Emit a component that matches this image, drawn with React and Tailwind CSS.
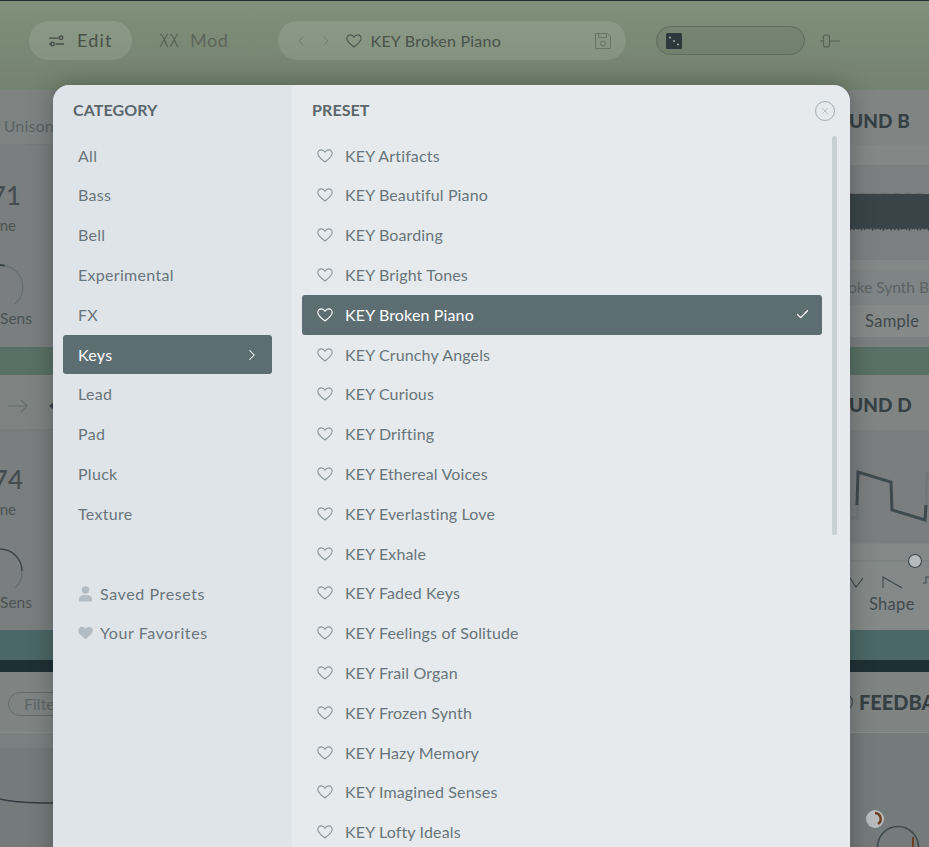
import React from "react";
import { ChevronLeft, ChevronRight, Check, X } from "lucide-react";

const categories = ["All", "Bass", "Bell", "Experimental", "FX", "Keys", "Lead", "Pad", "Pluck", "Texture"];
const presets = ["Artifacts", "Beautiful Piano", "Boarding", "Bright Tones", "Broken Piano", "Crunchy Angels", "Curious", "Drifting", "Ethereal Voices", "Everlasting Love", "Exhale", "Faded Keys", "Feelings of Solitude", "Frail Organ", "Frozen Synth", "Hazy Memory", "Imagined Senses", "Lofty Ideals"];

function OutlineHeart({ color = "#8b9499" }) {
  return (
    <svg width="16" height="14" viewBox="0 0 16 14" fill="none" stroke={color} strokeWidth="1.1" className="shrink-0">
      <path d="M8 13 C5 10.6 1 8 .8 4.6 C.7 2.4 2.4 .9 4.3 .9 C5.9 .9 7.2 1.8 8 3.2 C8.8 1.8 10.1 .9 11.7 .9 C13.6 .9 15.3 2.4 15.2 4.6 C15 8 11 10.6 8 13 Z" strokeLinejoin="round" />
    </svg>
  );
}

function WaveStrip() {
  const noise = (i, k) => Math.abs(Math.sin(i * k) * 2.4 + Math.sin(i * k * 2.7) * 1.2);
  let d = "M0 20";
  for (let i = 0; i <= 79; i += 1) d += ` L${i} ${1 + noise(i, 1.7)}`;
  for (let i = 79; i >= 0; i -= 1) d += ` L${i} ${39 - noise(i, 2.3)}`;
  return (
    <svg width="79" height="40" viewBox="0 0 79 40" className="block">
      <path d={d + "Z"} fill="#3a4447" />
    </svg>
  );
}

function TopBar() {
  return (
    <div className="h-[90px] shrink-0 border-t border-[#1f2d2a] bg-gradient-to-b from-[#80907a] to-[#74826f] flex items-start pt-[20px] pl-[29px] text-[#50584f] text-[18px] tracking-[0.6px]">
      <div className="h-[39px] w-[103px] rounded-full bg-white/10 flex items-center pl-[20px] gap-[13px] text-[#49514a] tracking-[1.2px]">
        <svg width="15" height="12" viewBox="0 0 15 12" fill="none" stroke="#454d46" strokeWidth="1.3">
          <path d="M0 3.2h9.5M0 9h3M6.5 9H15" />
          <circle cx="12" cy="2.8" r="1.8" />
          <circle cx="3.5" cy="9" r="1.8" />
        </svg>
        <span>Edit</span>
      </div>
      <div className="h-[39px] flex items-center ml-[27px] gap-[11px] text-[#5d665b]">
        <svg width="20" height="15" viewBox="0 0 20 15" fill="none" stroke="#586155" strokeWidth="1.2">
          <path d="M1 1c4 1 6 12 8 13M9 1C7 2 3 12 1 14M11 1c4 1 6 12 8 13M19 1c-2 1-6 11-8 13" />
        </svg>
        <span>Mod</span>
      </div>
      <div className="h-[39px] w-[348px] ml-[49px] rounded-full bg-white/10 flex items-center pl-[15px] text-[#4a534b] text-[16px] tracking-[0.25px]">
        <ChevronLeft size={16} strokeWidth={1.2} color="#6d776a" />
        <ChevronRight size={16} strokeWidth={1.2} color="#6d776a" className="ml-[9px]" />
        <span className="ml-[12px]"><OutlineHeart color="#4f574e" /></span>
        <span className="ml-[9px]">KEY Broken Piano</span>
        <svg width="18" height="18" viewBox="0 0 18 18" fill="none" stroke="#687265" strokeWidth="1" className="ml-auto mr-[14px]">
          <path d="M1.5 1.5h12l3 3v12h-15z" />
          <path d="M4.5 1.5v4h8v-4" />
          <circle cx="9" cy="11.5" r="2.5" />
        </svg>
      </div>
      <div className="h-[29px] w-[149px] ml-[30px] mt-[5px] rounded-full border border-[#5f6b5c] bg-black/5 flex items-center pl-[9px]">
        <svg width="16" height="16" viewBox="0 0 16 16">
          <rect width="16" height="16" rx="1.5" fill="#2b383c" />
          <circle cx="4" cy="4.5" r="1" fill="#aab3ad" />
          <circle cx="8" cy="8" r="1" fill="#aab3ad" />
          <circle cx="12" cy="11.5" r="1" fill="#aab3ad" />
        </svg>
      </div>
      <svg width="20" height="14" viewBox="0 0 20 14" fill="none" stroke="#566053" strokeWidth="1.1" className="ml-[15px] mt-[13px]">
        <path d="M0 7h3.5M10 7h10" />
        <rect x="3.5" y="1" width="6" height="12" rx="2" />
      </svg>
    </div>
  );
}

function SideText({ children, pr, className = "" }) {
  return (
    <div className={`flex justify-end whitespace-nowrap ${className}`} style={{ paddingRight: pr }}>
      {children}
    </div>
  );
}

function LeftPanel({ value, arrow }) {
  return (
    <div className="h-full flex flex-col">
      <div className="h-[55px] bg-[#7e8382] border-b border-[#777c7b] shrink-0">
        {arrow ? (
          <div className="flex items-center h-[55px] pl-[8px] pt-[6px]">
            <svg width="46" height="14" viewBox="0 0 46 14" fill="none" className="shrink-0">
              <path d="M0 7h19M13 1l6 6-6 6" stroke="#666c6c" strokeWidth="1.2" />
              <path d="M46 3l-5 4 5 4z" fill="#39434a" />
            </svg>
          </div>
        ) : (
          <div className="text-[15.5px] text-[#596162] tracking-[0.4px] pl-[4px] pt-[25px] whitespace-nowrap">Unison</div>
        )}
      </div>
      <SideText pr={arrow ? 30 : 32} className={`text-[26px] font-medium text-[#454c4f] leading-[30px] ${arrow ? "mt-[34px]" : "mt-[35px]"}`}>{value}</SideText>
      <SideText pr={37} className="text-[15px] text-[#4c5355] leading-[20px] mt-[5px]">ne</SideText>
      <svg width="40" height="52" viewBox="0 0 40 52" fill="none" className="mt-[28px] shrink-0">
        {arrow ? (
          <path d="M0 2A22 22 0 0 1 22 24" stroke="#3c4548" strokeWidth="1.4" />
        ) : (
          <path d="M0 2A22 22 0 0 1 5 2.6" stroke="#3c4548" strokeWidth="2" />
        )}
        <path d={arrow ? "M22 24A22 22 0 0 1 15 41" : "M5 2.6A22 22 0 0 1 15 41"} stroke="#666c6d" strokeWidth="1.1" />
      </svg>
      <SideText pr={21} className="text-[15.5px] text-[#4c5355] leading-[20px] -mt-[7px]">Sens</SideText>
    </div>
  );
}

function RightTop() {
  return (
    <div className="h-full flex flex-col bg-[#7b7f7f]">
      <div className="h-[55px] shrink-0 bg-[#808584] flex items-center pt-[8px] -ml-[1px] text-[19px] font-black text-[#364043] tracking-[0.1px] whitespace-nowrap">UND B</div>
      <div className="h-[20px] shrink-0 bg-[#838887]" />
      <div className="h-[95px] shrink-0 pt-[27px]"><WaveStrip /></div>
      <div className="h-[10px] shrink-0 bg-[#838887]" />
      <div className="h-[35px] shrink-0 bg-[#7f8484] flex items-center justify-end text-[15.5px] text-[#5c6364] whitespace-nowrap overflow-hidden">oke Synth B</div>
      <div className="h-[32px] shrink-0 bg-[#858a89] flex items-center pl-[15px] text-[16.5px] text-[#42494c] tracking-[0.3px]">Sample</div>
    </div>
  );
}

function RightMiddle() {
  return (
    <div className="h-full flex flex-col bg-[#7a7e7e]">
      <div className="h-[55px] shrink-0 bg-[#808584] flex items-center pt-[6px] -ml-[1px] text-[19px] font-black text-[#364043] tracking-[0.1px] whitespace-nowrap">UND D</div>
      <svg width="79" height="98" viewBox="0 0 79 98" fill="none" className="shrink-0 mt-[15px]">
        <path d="M1 73H7V60" stroke="#727777" strokeWidth="3" />
        <path d="M7 60L8 27 41 37 42 65 75 75 76 60" stroke="#3f4a4e" strokeWidth="3" />
        <path d="M76 60L77 27" stroke="#727777" strokeWidth="3" />
      </svg>
      <div className="flex-1 bg-[#848988] border-t border-[#7d8282] flex flex-col">
        <svg width="79" height="44" viewBox="0 0 79 44" fill="none" className="shrink-0 mt-[6px]">
          <path d="M0 11h59M72 11h7" stroke="#777c7c" strokeWidth="1" />
          <circle cx="65" cy="11" r="6.5" fill="#b6bbbc" stroke="#3e484b" strokeWidth="1.1" />
          <path d="M0 28l6 9 7-9M33 38V27l19 11M73 33h3v-6h3" stroke="#3e484b" strokeWidth="1.1" />
        </svg>
        <div className="text-[16.5px] text-[#42494c] pl-[19px] -mt-[1px] leading-[22px] tracking-[0.3px]">Shape</div>
      </div>
    </div>
  );
}

function CategoryColumn() {
  return (
    <div className="w-[239px] shrink-0 bg-[#dfe4e8] border-r border-[#e2e7ea] flex flex-col">
      <div className="h-[50.7px] shrink-0 flex items-center pl-[20px] text-[16px] font-bold tracking-[0.1px] text-[#5b676b]">CATEGORY</div>
      <div className="flex flex-col pl-[10px] pr-[19px]">
        {categories.map((c) => (
          <div key={c} className={c === "Keys" ? "h-[39.8px] rounded-[3px] bg-[#5d6e73] text-white pl-[15px] pr-[11px] flex items-center justify-between" : "h-[39.8px] pl-[15px] flex items-center text-[#69757a]"}>
            <span>{c}</span>
            {c === "Keys" && <ChevronRight size={18} strokeWidth={1.4} color="#ffffff" />}
          </div>
        ))}
      </div>
      <div className="flex items-center h-[39.8px] pl-[25px] gap-[7px] mt-[40px] text-[#69757a] tracking-[0.6px]">
        <svg width="15" height="16" viewBox="0 0 15 16" fill="#b3bcc2">
          <circle cx="7.5" cy="4" r="3.7" />
          <path d="M1 15.5v-2.5c0-2.6 2.5-4 6.5-4s6.5 1.4 6.5 4v2.5z" />
        </svg>
        <span>Saved Presets</span>
      </div>
      <div className="flex items-center h-[39.8px] pl-[25px] gap-[7px] text-[#69757a] tracking-[0.6px]">
        <svg width="15" height="14" viewBox="0 0 16 14" fill="#b3bcc2">
          <path d="M8 13.6 C5 11 .5 8.2 .3 4.6 C.2 2.2 2.2 .4 4.3 .4 C5.9 .4 7.2 1.3 8 2.7 C8.8 1.3 10.1 .4 11.7 .4 C13.8 .4 15.8 2.2 15.7 4.6 C15.5 8.2 11 11 8 13.6 Z" />
        </svg>
        <span>Your Favorites</span>
      </div>
    </div>
  );
}

function PresetColumn() {
  return (
    <div className="flex-1 bg-[#e6eaed] relative overflow-hidden">
      <div className="h-[50.7px] flex items-center pl-[20px] text-[16px] font-bold tracking-[0.1px] text-[#5b676b]">PRESET</div>
      <div className="flex flex-col pl-[10px] pr-[28px] tracking-[0.15px]">
        {presets.map((p) => {
          const on = p === "Broken Piano";
          return (
            <div key={p} className={on ? "h-[39.8px] shrink-0 rounded-[3px] bg-[#5d6e73] text-white flex items-center pl-[15px] pr-[12px]" : "h-[39.8px] shrink-0 text-[#69757a] flex items-center pl-[15px] pr-[12px]"}>
              <OutlineHeart color={on ? "#ffffff" : "#8b9499"} />
              <span className="ml-[12px]">KEY {p}</span>
              {on && <Check size={15} strokeWidth={2} color="#ffffff" className="ml-auto" />}
            </div>
          );
        })}
      </div>
      <div className="absolute left-[540px] top-[51px] w-[5px] h-[399px] rounded-[2px] bg-[#c9d0d3]" />
      <div className="absolute left-[523px] top-[16px] w-[20px] h-[20px] rounded-full border border-[#a4adb1] flex items-center justify-center">
        <X size={10} strokeWidth={1.2} color="#8c969a" />
      </div>
    </div>
  );
}

export default function App() {
  return (
    <div className="relative w-[929px] h-[847px] overflow-hidden flex flex-col bg-[#7a7e7e]" style={{ fontFamily: '"Lato", "Open Sans", sans-serif' }}>
      <TopBar />
      <div className="h-[257px] shrink-0 flex justify-between bg-[#7a7e7e]">
        <div className="w-[53px] overflow-hidden"><LeftPanel value="71" /></div>
        <div className="w-[79px] overflow-hidden"><RightTop /></div>
      </div>
      <div className="h-[28px] shrink-0 bg-[#587065]" />
      <div className="h-[255px] shrink-0 flex justify-between bg-[#7a7e7e]">
        <div className="w-[53px] overflow-hidden"><LeftPanel value="74" arrow /></div>
        <div className="w-[79px] overflow-hidden"><RightMiddle /></div>
      </div>
      <div className="h-[30px] shrink-0 bg-[#4b6767]" />
      <div className="h-[12px] shrink-0 bg-[#1f3035]" />
      <div className="flex-1 flex justify-between bg-[#757a7a]">
        <div className="w-[53px] overflow-hidden flex flex-col">
          <div className="h-[61px] shrink-0 bg-[#7f8483] border-b border-[#888d8c] pt-[20px] pl-[8px]">
            <div className="w-[80px] h-[24px] rounded-full border border-[#666c6c] text-[16px] text-[#5e6566] leading-[22px] pl-[15px]">Filter</div>
          </div>
          <div className="h-[15px] shrink-0 bg-[#7b8080]" />
          <svg width="53" height="30" viewBox="0 0 53 30" fill="none" className="mt-[30px] shrink-0">
            <path d="M0 21C12 24 30 25 53 25" stroke="#333d41" strokeWidth="1.3" />
          </svg>
        </div>
        <div className="w-[79px] overflow-hidden flex flex-col">
          <div className="h-[61px] shrink-0 bg-[#7f8483] border-b border-[#888d8c] flex items-center text-[20px] font-black text-[#364043] whitespace-nowrap pb-[1px]">
            <svg width="9" height="20" viewBox="0 0 9 20" fill="none" className="shrink-0">
              <path d="M0 4Q5 10 0 16" stroke="#4a5355" strokeWidth="1.3" />
            </svg>
            <span>FEEDBACK</span>
          </div>
          <svg width="79" height="114" viewBox="0 0 79 114" fill="none" className="shrink-0">
            <circle cx="25" cy="86" r="9" fill="#b8bcbc" />
            <path d="M25 80a6 6 0 0 1 3 11" stroke="#6e3e22" strokeWidth="2.5" />
            <circle cx="48" cy="114" r="20.5" stroke="#3d4a4e" strokeWidth="1.6" />
            <path d="M63 104v10" stroke="#6e3e22" strokeWidth="2" />
          </svg>
        </div>
      </div>
      <div className="absolute left-[53px] top-[85px] w-[797px] h-[800px] rounded-[16px] overflow-hidden flex shadow-[0_0_26px_rgba(0,0,0,0.28)] text-[16px] tracking-[0.3px]">
        <CategoryColumn />
        <PresetColumn />
      </div>
    </div>
  );
}
